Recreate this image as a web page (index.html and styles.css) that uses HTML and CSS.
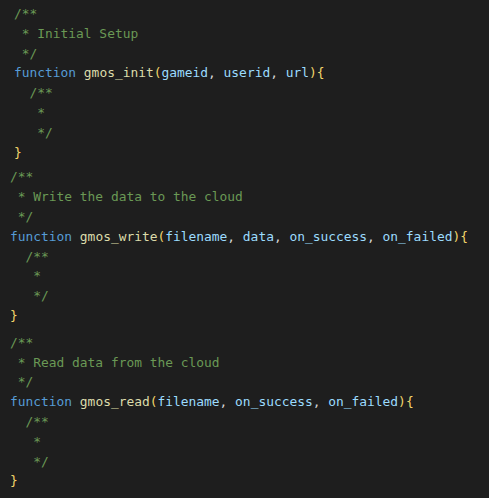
FILE: index.html
```html
<!DOCTYPE html>
<html>
<head>
<meta charset="utf-8">
<link rel="stylesheet" href="styles.css">
</head>
<body>
<main class="editor">
<pre class="block b1"><span class="c">/**
 * Initial Setup
 */</span>
<span class="k">function</span> <span class="f">gmos_init</span><span class="p">(</span><span class="v">gameid</span>, <span class="v">userid</span>, <span class="v">url</span><span class="p">)</span><span class="p">{</span>
<span class="c">  /**
   *
   */</span>
<span class="p">}</span></pre>
<pre class="block b2"><span class="c">/**
 * Write the data to the cloud
 */</span>
<span class="k">function</span> <span class="f">gmos_write</span><span class="p">(</span><span class="v">filename</span>, <span class="v">data</span>, <span class="v">on_success</span>, <span class="v">on_failed</span><span class="p">)</span><span class="p">{</span>
<span class="c">  /**
   *
   */</span>
<span class="p">}</span></pre>
<pre class="block b3"><span class="c">/**
 * Read data from the cloud
 */</span>
<span class="k">function</span> <span class="f">gmos_read</span><span class="p">(</span><span class="v">filename</span>, <span class="v">on_success</span>, <span class="v">on_failed</span><span class="p">)</span><span class="p">{</span>
<span class="c">  /**
   *
   */</span>
<span class="p">}</span></pre>
</main>
</body>
</html>
```
FILE: styles.css
```css
html, body {
  margin: 0;
  padding: 0;
  background: #1e1e1e;
}
.editor {
  display: flex;
  flex-direction: column;
  padding-top: 4px;
}
.block {
  margin: 0;
  font-family: "DejaVu Sans Mono", monospace;
  font-size: 12.9px;
  line-height: 19.8px;
  color: #d4d4d4;
  white-space: pre;
}
.b1 { padding-left: 14px; }
.b2 { padding-left: 10px; margin-top: 5px; }
.b3 { padding-left: 10px; margin-top: 7px; }
.c { color: #6a9955; }
.k { color: #569cd6; }
.f { color: #dcdcaa; }
.v { color: #9cdcfe; }
.p { color: #f3d66b; }
```
